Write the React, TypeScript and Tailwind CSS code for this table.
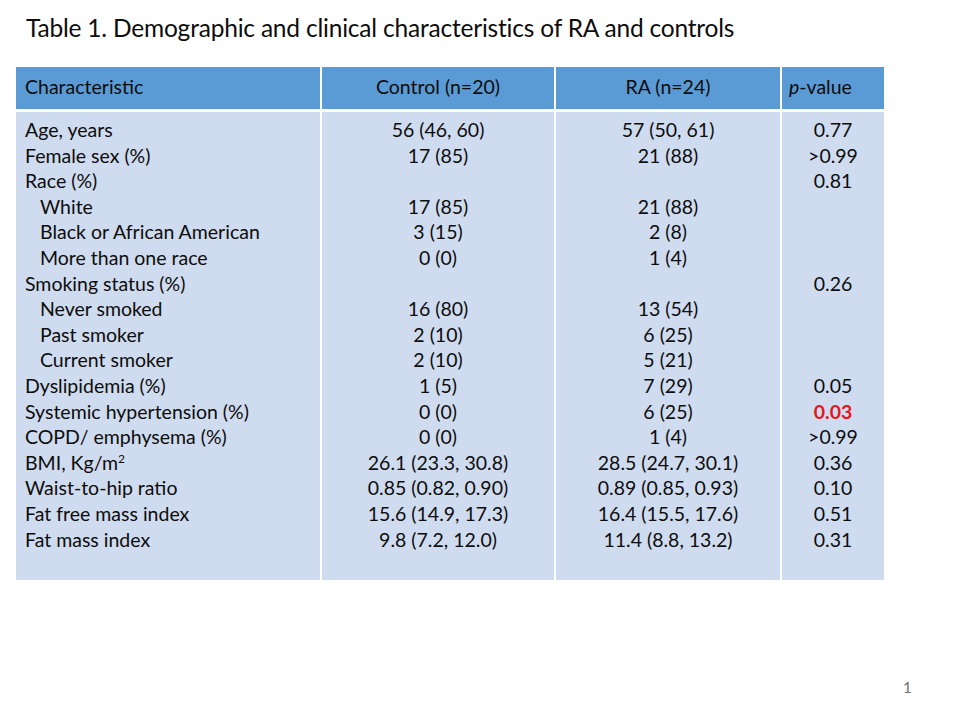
const rows: { label: React.ReactNode; indent?: boolean; control: string; ra: string; p: string; hi?: boolean }[] = [
  { label: "Age, years", control: "56 (46, 60)", ra: "57 (50, 61)", p: "0.77" },
  { label: "Female sex (%)", control: "17 (85)", ra: "21 (88)", p: ">0.99" },
  { label: "Race (%)", control: "", ra: "", p: "0.81" },
  { label: "White", indent: true, control: "17 (85)", ra: "21 (88)", p: "" },
  { label: "Black or African American", indent: true, control: "3 (15)", ra: "2 (8)", p: "" },
  { label: "More than one race", indent: true, control: "0 (0)", ra: "1 (4)", p: "" },
  { label: "Smoking status (%)", control: "", ra: "", p: "0.26" },
  { label: "Never smoked", indent: true, control: "16 (80)", ra: "13 (54)", p: "" },
  { label: "Past smoker", indent: true, control: "2 (10)", ra: "6 (25)", p: "" },
  { label: "Current smoker", indent: true, control: "2 (10)", ra: "5 (21)", p: "" },
  { label: "Dyslipidemia (%)", control: "1 (5)", ra: "7 (29)", p: "0.05" },
  { label: "Systemic hypertension (%)", control: "0 (0)", ra: "6 (25)", p: "0.03", hi: true },
  { label: "COPD/ emphysema (%)", control: "0 (0)", ra: "1 (4)", p: ">0.99" },
  {
    label: (
      <>
        BMI, Kg/m<sup className="text-[12px] relative -top-[7px]">2</sup>
      </>
    ),
    control: "26.1 (23.3, 30.8)",
    ra: "28.5 (24.7, 30.1)",
    p: "0.36",
  },
  { label: "Waist-to-hip ratio", control: "0.85 (0.82, 0.90)", ra: "0.89 (0.85, 0.93)", p: "0.10" },
  { label: "Fat free mass index", control: "15.6 (14.9, 17.3)", ra: "16.4 (15.5, 17.6)", p: "0.51" },
  { label: "Fat mass index", control: "9.8 (7.2, 12.0)", ra: "11.4 (8.8, 13.2)", p: "0.31" },
];

export default function App() {
  return (
    <div
      className="relative w-[960px] h-[720px] bg-white text-[#0d0d0d] overflow-hidden"
      style={{ fontFamily: "Lato, 'Liberation Sans', sans-serif" }}
    >
      <h1 className="pl-[26px] pt-[13px] text-[24.5px] leading-[30px] tracking-[-0.2px] whitespace-nowrap">
        Table 1. Demographic and clinical characteristics of RA and controls
      </h1>

      {/* table */}
      <div className="ml-[16px] mt-[24px] w-[868px] text-[19.5px]">
        <div className="flex h-[42px] bg-[#5b9bd5] items-center">
          <div className="w-[304px] pl-[9px] pb-[2px]">Characteristic</div>
          <div className="w-[234px] h-full flex items-center justify-center pb-[2px] border-l-2 border-white">Control (n=20)</div>
          <div className="w-[226px] h-full flex items-center justify-center pb-[2px] border-l-2 border-white">RA (n=24)</div>
          <div className="flex-1 h-full flex items-center pl-[7px] pb-[2px] border-l-2 border-white">
            <i>p</i>-value
          </div>
        </div>
        <div className="flex h-[471px] bg-[#cfdbee] border-t-[3px] border-white leading-[25.6px]">
          <div className="w-[304px] pl-[9px] pt-[5px] whitespace-nowrap">
            {rows.map((r, i) => (
              <div key={i} className={r.indent ? "pl-[15px]" : ""}>
                {r.label}
              </div>
            ))}
          </div>
          <div className="w-[234px] pt-[5px] border-l-2 border-white text-center">
            {rows.map((r, i) => (
              <div key={i}>{r.control || "\u00a0"}</div>
            ))}
          </div>
          <div className="w-[226px] pt-[5px] border-l-2 border-white text-center">
            {rows.map((r, i) => (
              <div key={i}>{r.ra || "\u00a0"}</div>
            ))}
          </div>
          <div className="flex-1 pt-[5px] border-l-2 border-white text-center">
            {rows.map((r, i) => (
              <div key={i} className={r.hi ? "font-bold text-[#e8141b]" : ""}>
                {r.p || "\u00a0"}
              </div>
            ))}
          </div>
        </div>
      </div>

      <div className="absolute left-[903px] top-[676px] text-[15px] text-[#6f6f6f]">1</div>
    </div>
  );
}
